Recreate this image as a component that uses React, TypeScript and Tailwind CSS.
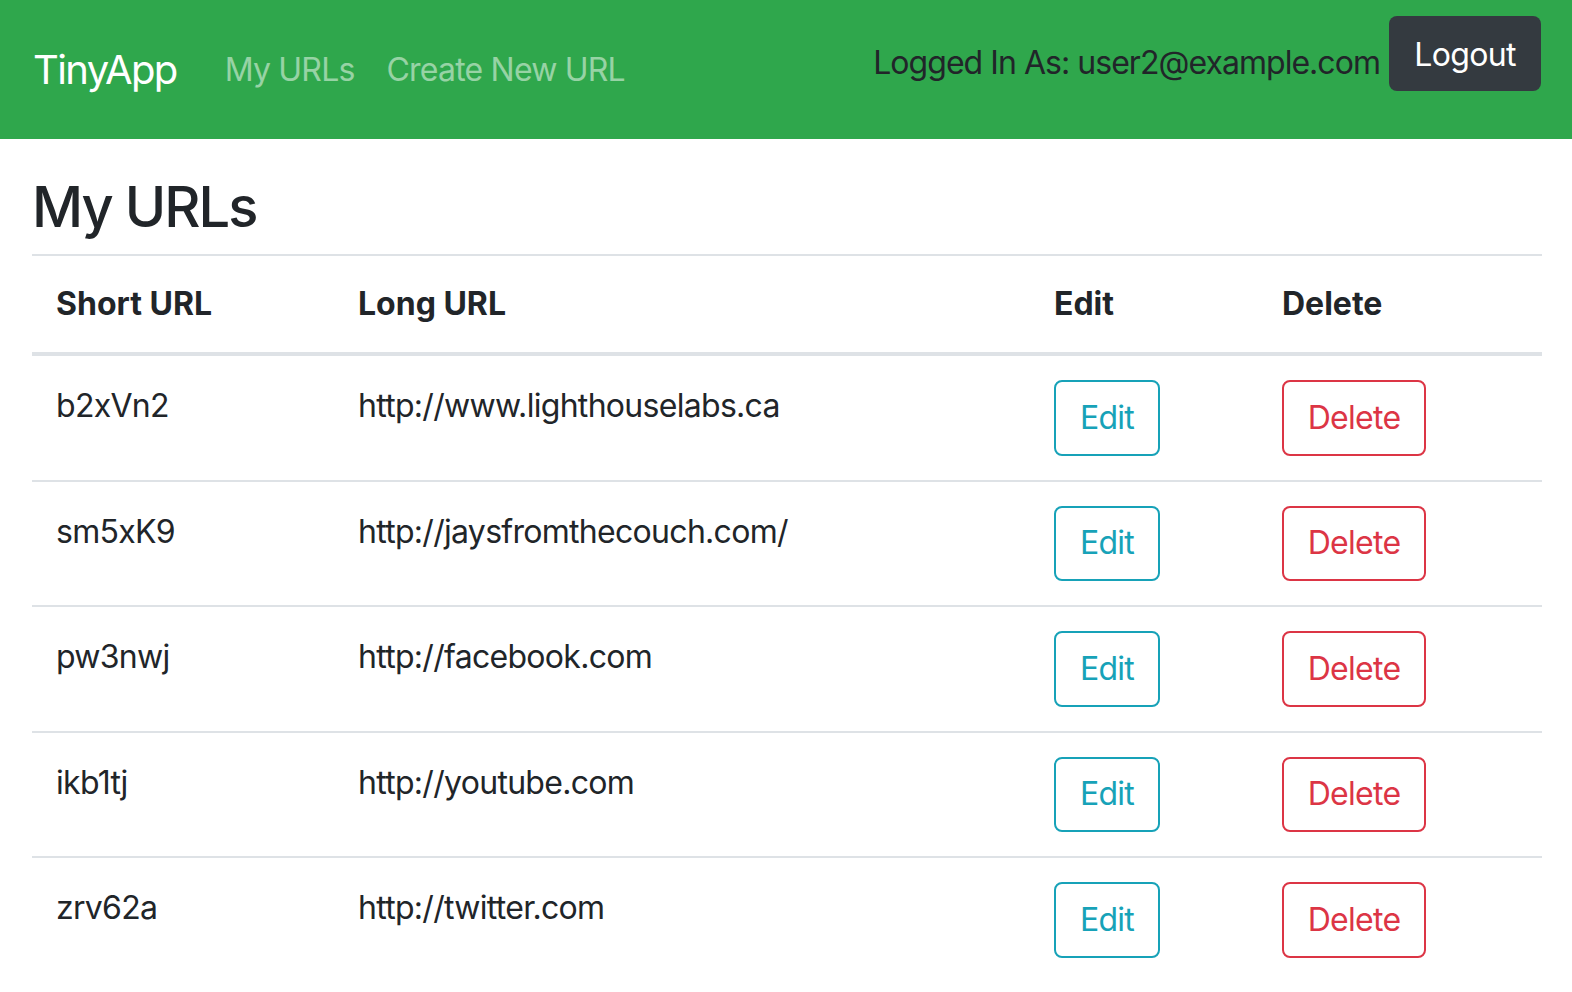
export default function App() {
  const urls = [
    { short: 'b2xVn2', long: 'http://www.lighthouselabs.ca' },
    { short: 'sm5xK9', long: 'http://jaysfromthecouch.com/' },
    { short: 'pw3nwj', long: 'http://facebook.com' },
    { short: 'ikb1tj', long: 'http://youtube.com' },
    { short: 'zrv62a', long: 'http://twitter.com' },
  ]

  return (
    <div className="min-h-screen bg-white text-[#212529] font-['Inter',sans-serif]">
      <nav className="flex h-[139px] items-center justify-between bg-[#2fa74c] pl-[33px] pr-[31px]">
        <div className="flex items-center">
          <a className="mr-[32px] text-[40px] leading-[60px] tracking-[-0.04em] text-white">TinyApp</a>
          <a className="px-[16px] text-[32px] leading-[48px] tracking-[-0.025em] text-white/50">My URLs</a>
          <a className="px-[16px] text-[32px] leading-[48px] tracking-[-0.025em] text-white/50">Create New URL</a>
        </div>
        <div className="flex h-full items-start gap-[9px] pt-[16px]">
          <span className="mt-[23px] text-[32px] leading-[48px] tracking-[-0.03em] text-[#212529]">
            Logged In As: user2@example.com
          </span>
          <button className="h-[75px] w-[152px] rounded-[8px] bg-[#343a40] pt-[2px] text-[32px] leading-[48px] tracking-[-0.02em] text-white">
            Logout
          </button>
        </div>
      </nav>

      <main className="pl-[32px] pr-[30px] pt-[35px]">
        <h3 className="mb-[13px] text-[56px] font-medium leading-[67px] tracking-[-0.035em]">My URLs</h3>
        <table className="w-full border-collapse text-left text-[32px] leading-[48px] tracking-[-0.022em]">
          <thead>
            <tr className="border-t-2 border-b-4 border-[#dee2e6]">
              <th className="w-[302px] px-[24px] py-[24px] font-bold tracking-normal">Short URL</th>
              <th className="w-[696px] px-[24px] py-[24px] font-bold tracking-normal">Long URL</th>
              <th className="w-[228px] px-[24px] py-[24px] font-bold tracking-normal">Edit</th>
              <th className="px-[24px] py-[24px] font-bold tracking-normal">Delete</th>
            </tr>
          </thead>
          <tbody>
            {urls.map((u) => (
              <tr key={u.short} className="border-t-2 border-[#dee2e6] first:border-t-0">
                <td className="px-[24px] pt-[26px] pb-[22px] align-top">{u.short}</td>
                <td className="px-[24px] pt-[26px] pb-[22px] align-top">{u.long}</td>
                <td className="px-[24px] py-[24px] align-top">
                  <button className="h-[75.5px] w-[106px] rounded-[8px] border-2 border-[#17a2b8] text-[#17a2b8]">
                    Edit
                  </button>
                </td>
                <td className="px-[24px] py-[24px] align-top">
                  <button className="h-[75.5px] w-[144px] rounded-[8px] border-2 border-[#dc3545] text-[#dc3545]">
                    Delete
                  </button>
                </td>
              </tr>
            ))}
          </tbody>
        </table>
      </main>
    </div>
  )
}
